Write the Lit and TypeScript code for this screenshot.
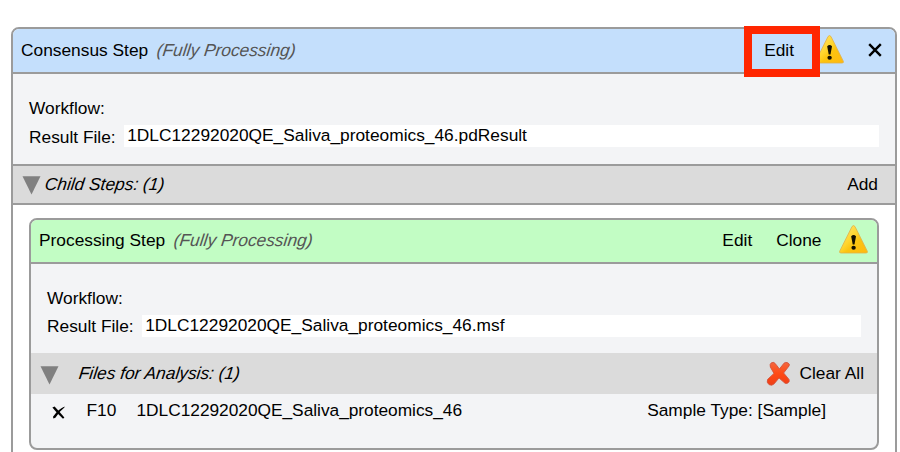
import { LitElement, html, css } from "lit";
import { customElement } from "lit/decorators.js";

const warning = html`<svg class="warn" width="29" height="29" viewBox="0 0 29 29">
  <defs>
    <linearGradient id="w" x1="0" y1="0" x2="1" y2="1">
      <stop offset="0" stop-color="#ffe873" /><stop offset="0.45" stop-color="#ffd52e" /><stop offset="0.6" stop-color="#fcc410" /><stop offset="1" stop-color="#ffb90f" />
    </linearGradient>
  </defs>
  <path d="M13 1.6Q14.5-.6 16 1.6L28.4 26.4Q28.8 28 27 28H2Q.2 28 .6 26.4Z" fill="url(#w)" stroke="#dfb04a" stroke-width=".8" />
  <path d="M12.2 11.2Q14.6 8.6 17 11.2L15.5 19.4H13.7Z" fill="#151000" />
  <ellipse cx="14.6" cy="22.8" rx="2.2" ry="2" fill="#151000" />
</svg>`;

const arrow = html`<svg class="arrow" width="19" height="19" viewBox="0 0 19 19"><path d="M.5 .3H18.5L9.5 18.5Z" fill="#808080" /></svg>`;

const close = html`<svg class="close" width="14" height="14" viewBox="0 0 14 14"><path d="M1.2 1.2L12.8 12.8M12.8 1.2L1.2 12.8" stroke="#000" stroke-width="2.4" /></svg>`;

const remove = html`<svg class="remove" width="13" height="13" viewBox="0 0 13 13">
  <path d="M.4 1.6L2.6 .6Q7 5.4 12.4 11.4L11 12.8Q5 7.6 .4 1.6Z" fill="#000" />
  <path d="M12.6 .4L12.4 1.4Q7.8 4.8 3.4 11.8L1.4 12.6L1 10.8Q6 3 12.6 .4Z" fill="#000" />
</svg>`;

const clear = html`<svg class="clear" width="25" height="25" viewBox="0 0 25 25">
  <defs>
    <linearGradient id="c" x1="0" y1="0" x2="0" y2="1">
      <stop offset="0" stop-color="#f4673f" /><stop offset=".5" stop-color="#ff4a14" /><stop offset="1" stop-color="#ee3f18" />
    </linearGradient>
  </defs>
  <path d="M5.4 1.8Q8 .4 9.8 3.2L13.4 8L18 2.2Q19.6 .8 21.8 1.8Q24.3 3 23 5L17.6 12L23 18.4Q24 20.8 21.6 22.2Q19.2 23.2 17.6 21L13 16.9L8.2 22.8Q6 25.2 3 23.6Q.2 21.4 1.6 18.4L8 12.4L4.4 6.2Q3.4 3.2 5.4 1.8Z" fill="url(#c)" stroke="#d4543c" stroke-width=".9" />
</svg>`;

@customElement("app-root")
export class AppRoot extends LitElement {
  static styles = css`
    :host { display: block; height: 452px; overflow: hidden; background: #fff; position: relative;
      font: 17.33px/20px "Liberation Sans", Arial, sans-serif; color: #000; }
    * { box-sizing: border-box; }
    span { white-space: pre; }
    .card { border: 2px solid #9b9b9b; border-radius: 8px; background: #f3f4f6; overflow: hidden; }
    .outer { margin: 27px 3px 0 11px; height: 500px; background: #fff; }
    .inner { margin: 13px 16px 0 16px; height: 232px; }
    .head { display: flex; align-items: center; padding: 0 0 1px 8px; border-bottom: 2px solid #9b9b9b; }
    .blue { background: #c4dffc; height: 45px; }
    .green { background: #c2fdc4; height: 44px; padding-right: 9.5px; padding-bottom: 2px; }
    .slant { font-style: italic; transform: skewX(-7deg); }
    .status { color: #555; margin-left: 9px; }
    .grow { flex: 1; }
    .warn { margin-bottom: 2px; }
    .blue .warn { margin-left: 21px; }
    .close { margin: 0 13.5px 0 23.5px; }
    .clone { margin: 0 17px 0 24px; }
    .info { height: 90px; background: #f3f4f6; padding: 24px 16px 0; }
    .inner .info { height: 89px; }
    .row { display: flex; height: 27px; }
    .inner .label { line-height: 23px; }
    .field { flex: 1; height: 22px; margin-left: 8px; padding-left: 3.5px; background: #fff; line-height: 20px; }
    .file { display: flex; align-items: flex-start; }
    .label { line-height: 24px; }
    .bar { display: flex; align-items: center; background: #dbdbdb; padding-bottom: 1px; }
    .arrow { margin-top: 3px; }
    .children { height: 41px; border-top: 2px solid #9b9b9b; border-bottom: 2px solid #9b9b9b; padding: 0 17px 2px 9px; }
    .children .slant { margin-left: 4px; }
    .files { height: 41px; padding-left: 9px; padding-right: 13px; }
    .files .arrow { margin-top: 5px; }
    .files .slant { margin-left: 20px; }
    .clear { margin-right: 8.5px; }
    .analysis { display: flex; padding: 6px 51px 0 21px; }
    .remove { margin: 6px 21.5px 0 0; }
    .id { width: 50px; }
    .name { letter-spacing: -0.03px; }
    .mark { position: absolute; left: 744px; top: 26px; width: 76px; height: 51px; border: 8px solid #ff2600; }
    svg { flex: none; display: block; }
  `;

  info(file: string) {
    return html`<div class="info">
      <div class="row"><span>Workflow:</span></div>
      <div class="file"><span class="label">Result File:</span><span class="field">${file}</span></div>
    </div>`;
  }

  render() {
    return html`
      <div class="card outer">
        <div class="head blue">
          <span>Consensus Step</span><span class="slant status">(Fully Processing)</span>
          <div class="grow"></div><span>Edit</span>${warning}${close}
        </div>
        ${this.info("1DLC12292020QE_Saliva_proteomics_46.pdResult")}
        <div class="bar children">${arrow}<span class="slant">Child Steps: (1)</span><div class="grow"></div><span>Add</span></div>
        <div class="card inner">
          <div class="head green">
            <span>Processing Step</span><span class="slant status">(Fully Processing)</span>
            <div class="grow"></div><span>Edit</span><span class="clone">Clone</span>${warning}
          </div>
          ${this.info("1DLC12292020QE_Saliva_proteomics_46.msf")}
          <div class="bar files">${arrow}<span class="slant">Files for Analysis: (1)</span><div class="grow"></div>${clear}<span>Clear All</span></div>
          <div class="analysis">${remove}<span class="id">F10</span><span class="name">1DLC12292020QE_Saliva_proteomics_46</span><div class="grow"></div><span>Sample Type: [Sample]</span></div>
        </div>
      </div>
      <div class="mark"></div>`;
  }
}
